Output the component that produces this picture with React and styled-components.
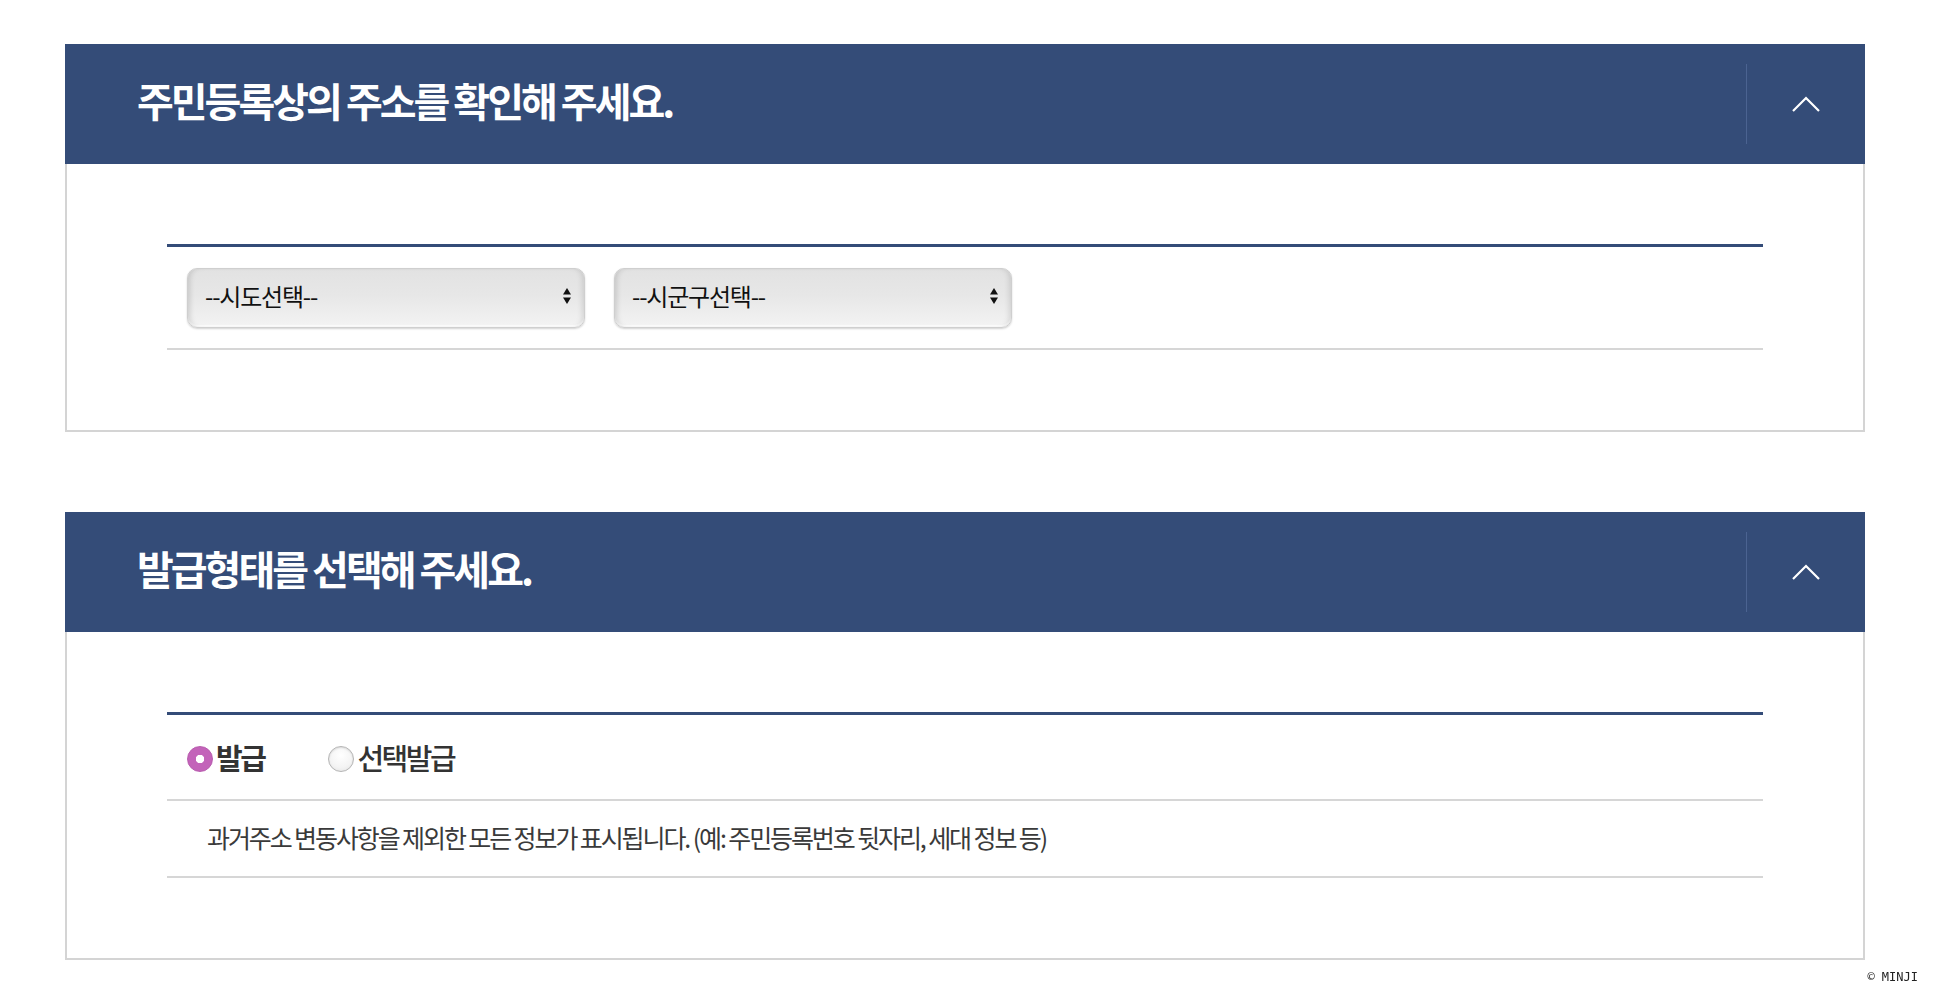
import styled, { createGlobalStyle } from "styled-components";

const GlobalStyle = createGlobalStyle`
  html, body {
    margin: 0;
    padding: 0;
    background: #ffffff;
  }
  body {
    font-family: "Noto Sans CJK KR", "Noto Sans", sans-serif;
  }
`;

const Page = styled.div`
  padding: 44px 0 40px 65px;
  display: flex;
  flex-direction: column;
  gap: 80px;
`;

const Panel = styled.section`
  width: 1800px;
`;

const Header = styled.div`
  height: 120px;
  background: #344c78;
  display: flex;
  align-items: center;
`;

const Title = styled.h2`
  flex: 1;
  margin: 0 0 8px;
  padding-left: 72px;
  color: #fff;
  font-size: 40px;
  font-weight: 700;
  letter-spacing: -3px;
  line-height: 1;
`;

const Toggle = styled.button`
  width: 119px;
  height: 80px;
  border: 0;
  border-left: 1px solid #4b6391;
  background: transparent;
  display: flex;
  align-items: center;
  justify-content: center;
  cursor: pointer;
  padding: 0;
`;

const Body = styled.div`
  border: 2px solid #d4d4d4;
  border-top: 0;
  padding: 80px 100px;
`;

const Table = styled.div`
  border-top: 3px solid #344c78;
`;

const Row = styled.div`
  display: flex;
  align-items: center;
  border-bottom: 2px solid #d6d6d6;
  height: ${(p) => p.h}px;
  padding-left: ${(p) => p.pl}px;
  gap: ${(p) => p.gap || 0}px;
`;

const SelectBox = styled.div`
  box-sizing: border-box;
  width: 398px;
  height: 60px;
  border: 1px solid #cfcfcf;
  border-radius: 10px;
  background: linear-gradient(to bottom, #e2e2e2 0%, #e7e7e7 45%, #f3f3f3 100%);
  box-shadow: inset 5px 0 6px -4px rgba(0, 0, 0, 0.18),
    inset -5px 0 6px -4px rgba(0, 0, 0, 0.15), inset 0 -2px 1px rgba(255, 255, 255, 0.8),
    0 1px 2px rgba(0, 0, 0, 0.18);
  display: flex;
  align-items: center;
  justify-content: space-between;
  padding: 0 12px 4px 17px;
  color: #111;
  font-size: 24px;
  letter-spacing: -1.2px;
  cursor: pointer;
`;

const RadioLabel = styled.label`
  display: flex;
  align-items: center;
  margin-right: ${(p) => p.mr || 0}px;
  color: #333;
  font-size: 29px;
  letter-spacing: -2.5px;
  font-weight: ${(p) => (p.checked ? 700 : 500)};
  cursor: pointer;
`;

const RadioDot = styled.span`
  box-sizing: border-box;
  width: 26px;
  height: 26px;
  border-radius: 50%;
  margin-right: 3px;
  margin-top: 3px;
  flex-shrink: 0;
  background: ${(p) =>
    p.checked
      ? "radial-gradient(circle, #fff 0 4px, #c363b9 4.5px)"
      : "radial-gradient(circle at 50% 35%, #ffffff 0%, #f4f4f4 60%, #e2e2e2 100%)"};
  border: ${(p) => (p.checked ? "1px solid #b85aae" : "1px solid #b5b5b5")};
  box-shadow: ${(p) => (p.checked ? "none" : "inset 0 1px 2px rgba(0,0,0,0.12)")};
`;

const Desc = styled.p`
  margin: 0 0 4px;
  color: #3a3a3a;
  font-size: 25px;
  letter-spacing: -2.1px;
`;

const Copyright = styled.div`
  position: fixed;
  right: 22px;
  bottom: 18px;
  font-family: "DejaVu Sans Mono", "Liberation Mono", monospace;
  font-size: 12px;
  color: #222;
`;

function Chevron() {
  return (
    <svg width="30" height="17" viewBox="0 0 30 17">
      <polyline points="2,15 15,2 28,15" fill="none" stroke="#fff" strokeWidth="2.2" />
    </svg>
  );
}

function Arrows() {
  return (
    <svg width="10" height="18" viewBox="0 0 10 18">
      <polygon points="5,1 9,7.5 1,7.5" fill="#111" />
      <polygon points="1,10.5 9,10.5 5,17" fill="#111" />
    </svg>
  );
}

function PanelHead({ title }) {
  return (
    <Header>
      <Title>{title}</Title>
      <Toggle aria-label="접기">
        <Chevron />
      </Toggle>
    </Header>
  );
}

export default function App() {
  const radios = [
    { label: "발급", checked: true },
    { label: "선택발급", checked: false },
  ];

  return (
    <>
      <GlobalStyle />
      <Page>
        <Panel>
          <PanelHead title="주민등록상의 주소를 확인해 주세요." />
          <Body>
            <Table>
              <Row h={101} pl={20} gap={29}>
                <SelectBox>
                  <span>--시도선택--</span>
                  <Arrows />
                </SelectBox>
                <SelectBox>
                  <span>--시군구선택--</span>
                  <Arrows />
                </SelectBox>
              </Row>
            </Table>
          </Body>
        </Panel>

        <Panel>
          <PanelHead title="발급형태를 선택해 주세요." />
          <Body>
            <Table>
              <Row h={84} pl={20}>
                {radios.map((r, i) => (
                  <RadioLabel key={r.label} checked={r.checked} mr={i === 0 ? 64 : 0}>
                    <RadioDot checked={r.checked} />
                    {r.label}
                  </RadioLabel>
                ))}
              </Row>
              <Row h={75} pl={40}>
                <Desc>과거주소 변동사항을 제외한 모든 정보가 표시됩니다. (예: 주민등록번호 뒷자리, 세대 정보 등)</Desc>
              </Row>
            </Table>
          </Body>
        </Panel>
      </Page>
      <Copyright>© MINJI</Copyright>
    </>
  );
}
